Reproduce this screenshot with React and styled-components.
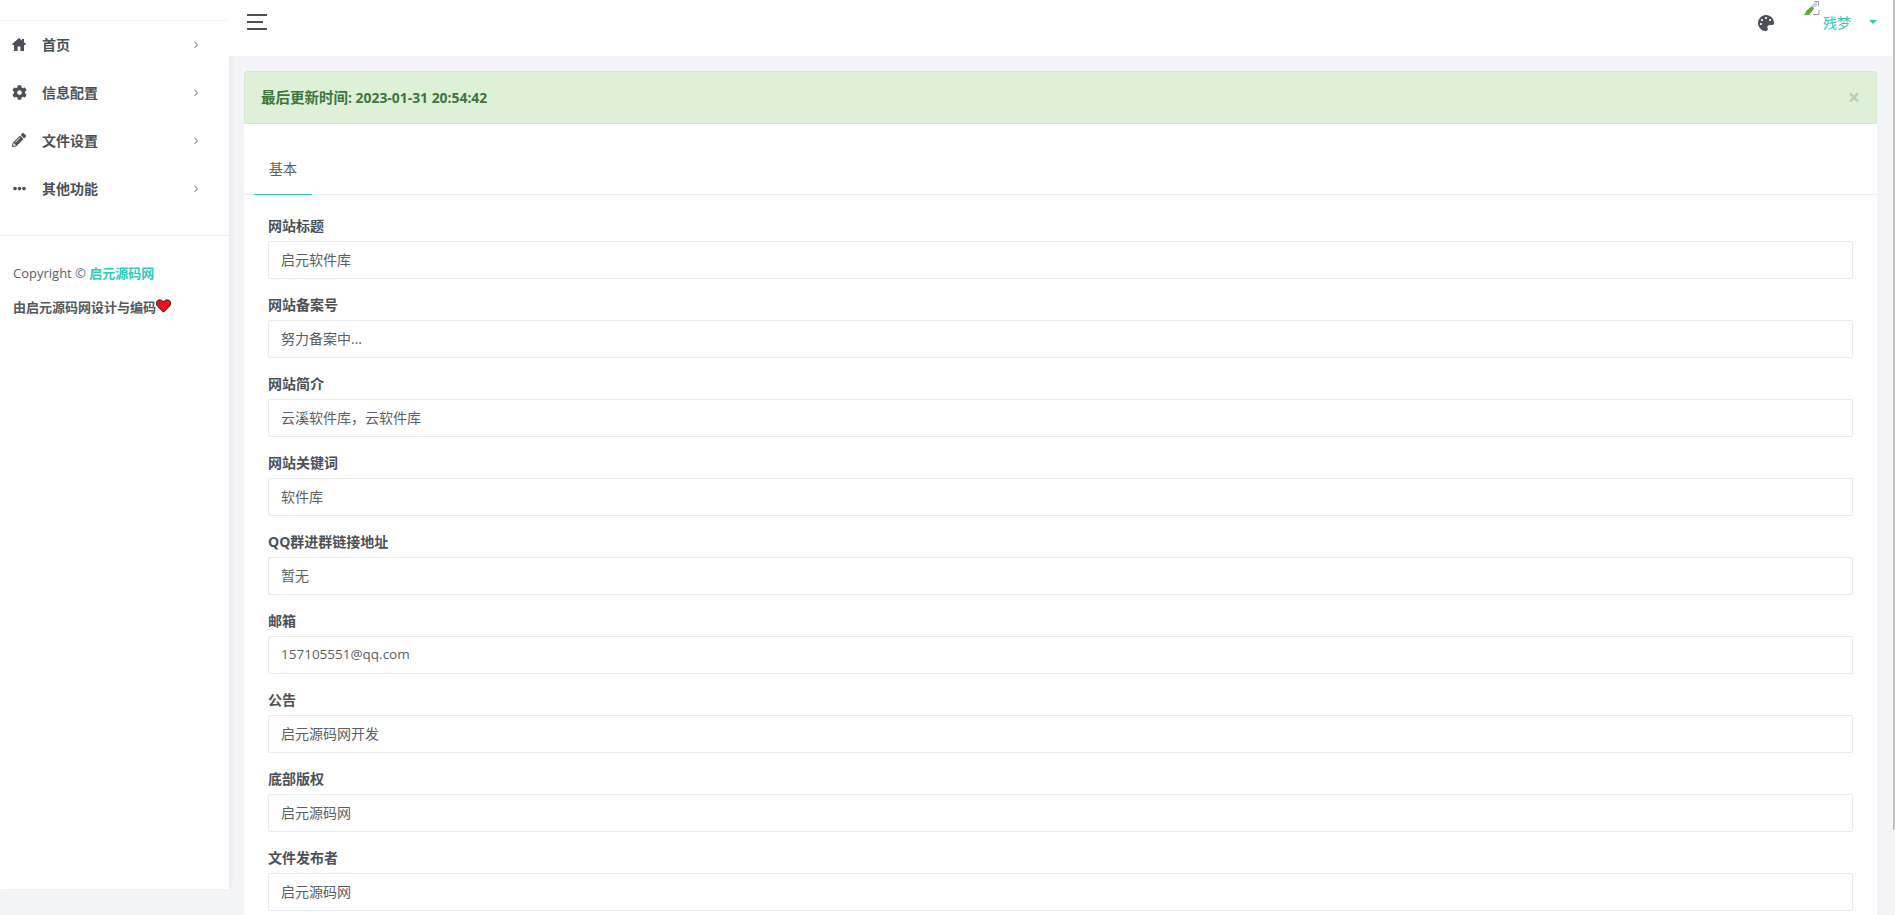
import React from 'react';
import styled, { createGlobalStyle } from 'styled-components';
import { FaCog, FaPencilAlt, FaEllipsisH, FaPalette } from 'react-icons/fa';

const FONT = '"Open Sans", "Noto Sans CJK SC", sans-serif';

const Global = createGlobalStyle`
  html, body { margin: 0; padding: 0; height: 100%; overflow: hidden; background: #f3f4f8; }
  * { box-sizing: border-box; }
  body { font-family: ${FONT}; font-size: 14px; color: #4c5157; }
`;

const Page = styled.div`
  display: flex;
  width: 1895px;
  height: 915px;
  overflow: hidden;
  position: relative;
`;

const Sidebar = styled.aside`
  width: 229px;
  flex: none;
  height: 889px;
  background: #fff;
  box-shadow: 3px 0 5px -2px rgba(0, 0, 0, 0.07);
  display: flex;
  flex-direction: column;
  padding-top: 20px;
`;

const TopRule = styled.div`
  border-top: 1px solid #f6f6f8;
  height: 0;
`;

const Menu = styled.nav`
  height: 215px;
  border-bottom: 1px solid #f1f2f4;
`;

const MenuItem = styled.div`
  height: 48px;
  display: flex;
  align-items: center;
  padding-left: 11px;
  font-weight: 600;
  font-size: 14px;
  color: #4c5157;
`;

const MenuIcon = styled.span`
  width: 16px;
  display: flex;
  justify-content: center;
  font-size: ${p => p.$size}px;
  margin: 0 15px 2px 0;
`;

const MenuLabel = styled.span`
  flex: 1;
  margin-bottom: 2px;
`;

const Chevron = styled.svg`
  width: 6px;
  height: 8px;
  margin-right: 30px;
`;

const Foot = styled.div`
  padding: 27px 13px 0;
  font-size: 13px;
`;

const CopyLine = styled.div`
  height: 20px;
  line-height: 20px;
  color: #5b6066;
  font-weight: 500;
`;

const Brand = styled.span`
  color: #2fcbb8;
  font-weight: 700;
`;

const MadeLine = styled.div`
  margin-top: 13px;
  display: flex;
  align-items: center;
  height: 20px;
  font-weight: 600;
  color: #54595f;
`;

const Main = styled.div`
  flex: 1;
  min-width: 0;
  display: flex;
  flex-direction: column;
`;

const Topbar = styled.header`
  height: 56px;
  flex: none;
  width: 1664px;
  background: #fff;
  display: flex;
  align-items: center;
  padding-left: 18px;
`;

const Burger = styled.div`
  display: flex;
  flex-direction: column;
  gap: 5px;
  width: 20px;
  margin-top: -13px;
`;

const BurgerLine = styled.i`
  display: block;
  height: 2px;
  width: ${p => p.$w}px;
  background: #4c5157;
`;

const Right = styled.div`
  margin-left: auto;
  display: flex;
  align-items: center;
  position: relative;
  height: 56px;
  color: #4c5157;
`;

const Palette = styled.span`
  display: flex;
  font-size: 16px;
  margin-right: 49px;
  margin-top: -10px;
`;

const Broken = styled.svg`
  position: absolute;
  right: 73px;
  top: 1px;
  width: 16px;
  height: 14px;
`;

const User = styled.span`
  color: #2fcbb8;
  font-size: 14px;
  margin-top: -13px;
  width: 28px;
`;

const Caret = styled.i`
  width: 0;
  height: 0;
  border: 4px solid transparent;
  border-top-color: #2fcbb8;
  border-bottom: 0;
  margin: -13px 16px 0 18px;
`;

const Content = styled.main`
  padding: 15px 16px 0 15px;
  width: 1664px;
`;

const Alert = styled.div`
  height: 53px;
  background: #dff0d8;
  border: 1px solid #d6e9c6;
  border-radius: 3px 3px 0 0;
  color: #3c763d;
  font-weight: 700;
  font-size: 14.5px;
  display: flex;
  align-items: center;
  justify-content: space-between;
  padding: 0 16px 0 16px;
`;

const AlertText = styled.span`
  margin-bottom: 2px;
`;

const Stamp = styled.span`
  font-size: 13.9px;
`;

const Close = styled.span`
  color: #b9cfb4;
  font-size: 21px;
  font-weight: 700;
  line-height: 1;
`;

const Card = styled.section`
  background: #fff;
  height: 800px;
`;

const Tabs = styled.div`
  height: 71px;
  border-bottom: 1px solid #e9ecef;
  display: flex;
  align-items: flex-end;
  padding-left: 10px;
`;

const Tab = styled.div`
  width: 58px;
  height: 46px;
  text-align: center;
  line-height: 40px;
  font-size: 14px;
  color: #5b6066;
  border-bottom: 1px solid #2fcbb8;
  margin-bottom: -1px;
`;

const Form = styled.div`
  padding: 19px 24px 0;
`;

const Group = styled.div`
  height: 79px;
`;

const Label = styled.label`
  display: block;
  height: 27px;
  line-height: 23px;
  font-weight: 700;
  font-size: 14px;
  color: #4c5157;
`;

const Field = styled.div`
  height: 38px;
  border: 1px solid #e9ebec;
  border-radius: 2px;
  background: #fff;
  padding: 0 12px;
  line-height: 35px;
  font-size: ${p => (p.$latin ? 13.5 : 14)}px;
  color: #5b6066;
`;

const Scrollbar = styled.div`
  position: absolute;
  right: 0;
  top: 0;
  width: 2px;
  height: 915px;
  background: #f1f1f1;
`;

const Thumb = styled.div`
  height: 830px;
  background: #c1c1c1;
`;

const Arrow = () => (
  <Chevron viewBox="0 0 6 8" fill="none" stroke="#5b6066" strokeWidth="1">
    <path d="M1.5 1 L4.5 4 L1.5 7" />
  </Chevron>
);

const Heart = () => (
  <svg width="15" height="14" viewBox="0 0 15 14">
    <path d="M7.5 13.2 L1.4 7 C-0.4 5 0.2 1.6 3 1 C5 0.6 6.6 1.6 7.5 3 C8.4 1.6 10 0.6 12 1 C14.8 1.6 15.4 5 13.6 7 Z" fill="#e8141c" stroke="#3a0d0d" strokeWidth="1" />
  </svg>
);

const House = () => (
  <svg width="14" height="13" viewBox="0 0 14 13" fill="currentColor">
    <path d="M7 0 L10 2.6 V1 H12 V4.3 L14 6 L13.2 7 H12 V13 H8.4 V8.5 H5.6 V13 H2 V7 H.8 L0 6 Z" />
  </svg>
);

const menu = [
  [House, '首页', 15],
  [FaCog, '信息配置', 15],
  [FaPencilAlt, '文件设置', 14],
  [FaEllipsisH, '其他功能', 13],
];

const fields = [
  ['网站标题', '启元软件库'],
  ['网站备案号', '努力备案中...'],
  ['网站简介', '云溪软件库，云软件库'],
  ['网站关键词', '软件库'],
  ['QQ群进群链接地址', '暂无'],
  ['邮箱', '157105551@qq.com', true],
  ['公告', '启元源码网开发'],
  ['底部版权', '启元源码网'],
  ['文件发布者', '启元源码网'],
];

export default function App() {
  return (
    <Page>
      <Global />
      <Sidebar>
        <TopRule />
        <Menu>
          {menu.map(([Icon, label, size]) => (
            <MenuItem key={label}>
              <MenuIcon $size={size}><Icon /></MenuIcon>
              <MenuLabel>{label}</MenuLabel>
              <Arrow />
            </MenuItem>
          ))}
        </Menu>
        <Foot>
          <CopyLine>Copyright © <Brand>启元源码网</Brand></CopyLine>
          <MadeLine>由启元源码网设计与编码<Heart /></MadeLine>
        </Foot>
      </Sidebar>
      <Main>
        <Topbar>
          <Burger>
            <BurgerLine $w={20} />
            <BurgerLine $w={16} />
            <BurgerLine $w={20} />
          </Burger>
          <Right>
            <Palette><FaPalette /></Palette>
            <Broken viewBox="0 0 16 14">
              <path d="M0 14 L3 9 L8 5 L10 7.5 L5 14 Z" fill="#5cab3c" />
              <path d="M5 7 L10 2 L13 1 L13 5 L9.5 7 L8 5 Z" fill="#c4d3ee" />
              <path d="M10 .5 L14.5 .5 L14.5 5 M15 9 L15 13.5 L9 13.5" fill="none" stroke="#9a9a9a" strokeWidth="1" />
            </Broken>
            <User>残梦</User>
            <Caret />
          </Right>
        </Topbar>
        <Content>
          <Alert>
            <AlertText>最后更新时间<Stamp>: 2023-01-31 20:54:42</Stamp></AlertText>
            <Close>×</Close>
          </Alert>
          <Card>
            <Tabs><Tab>基本</Tab></Tabs>
            <Form>
              {fields.map(([label, value, latin]) => (
                <Group key={label}>
                  <Label>{label}</Label>
                  <Field $latin={latin}>{value}</Field>
                </Group>
              ))}
            </Form>
          </Card>
        </Content>
      </Main>
      <Scrollbar><Thumb /></Scrollbar>
    </Page>
  );
}
